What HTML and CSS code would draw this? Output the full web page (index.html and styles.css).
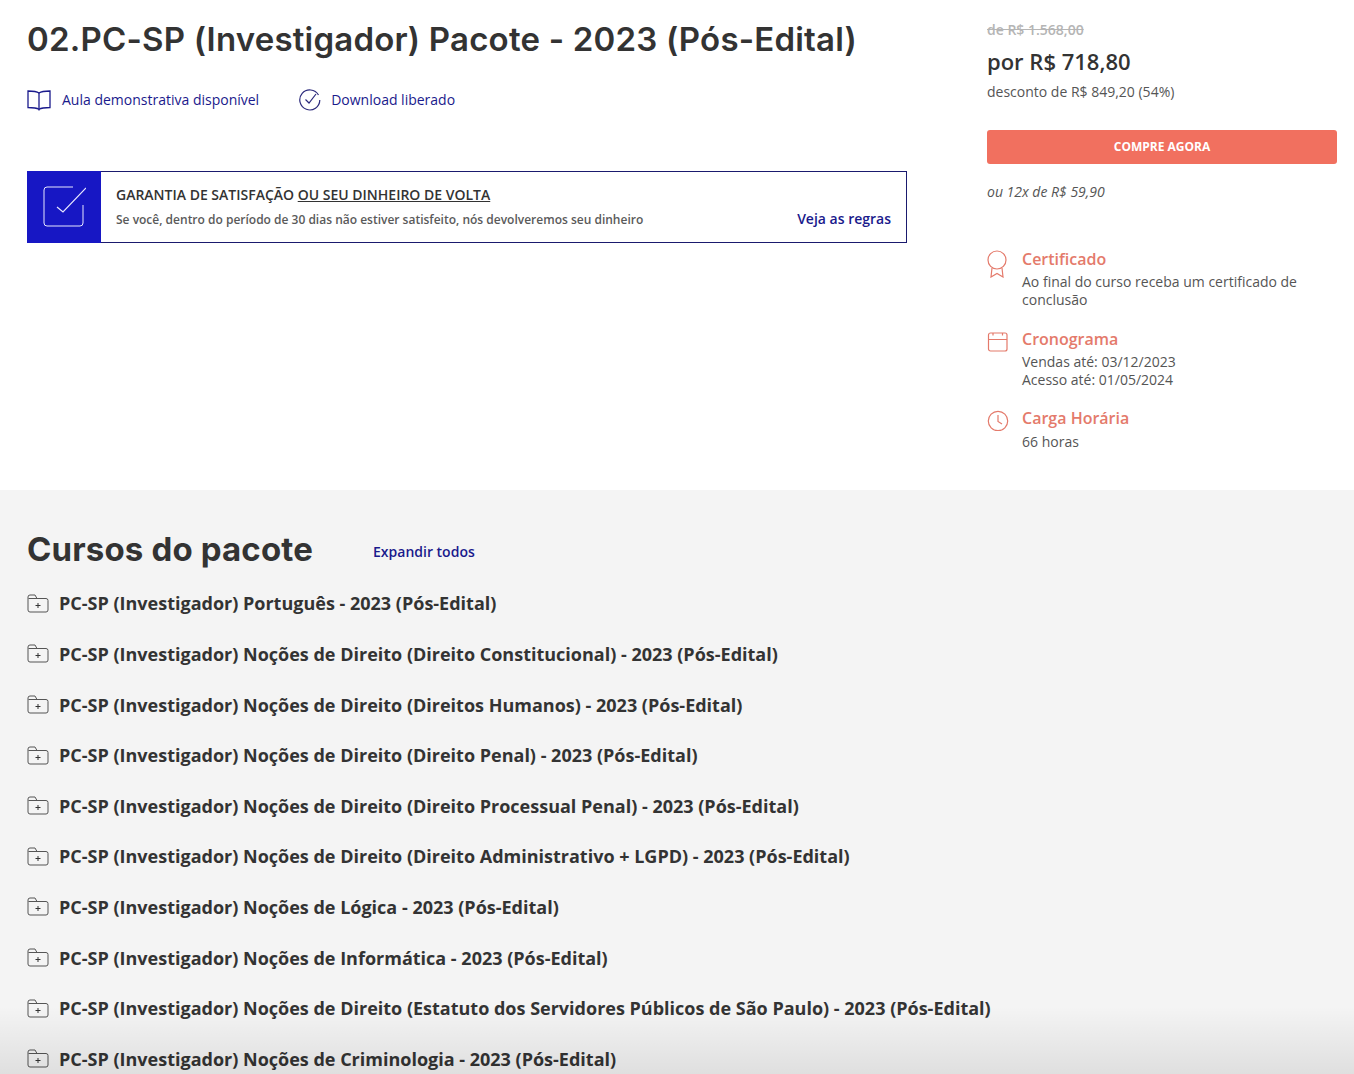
FILE: index.html
```html
<!DOCTYPE html>
<html lang="pt-BR">
  <head>
    <meta charset="UTF-8" />
    <title>02.PC-SP (Investigador) Pacote - 2023 (Pós-Edital)</title>
    <link rel="stylesheet" href="styles.css">
  </head>
  <body>
    <section class="top">
      <div class="main-col">
        <h1>02.PC-SP (Investigador) Pacote - 2023 (Pós-Edital)</h1>

        <div class="features">
          <a class="feature feature-book">
            <svg class="feature-icon" width="24" height="22" viewBox="0 0 24 22" fill="none" stroke="#1a1a8c" stroke-width="1.3">
              <path d="M12 4 C10 2.6 7 2 1 2 V18.5 C7 18.5 10 19 12 20.2 C14 19 17 18.5 23 18.5 V2 C17 2 14 2.6 12 4 Z" />
              <path d="M12 4 V21.5" />
            </svg>
            Aula demonstrativa disponível
          </a>
          <a class="feature">
            <svg class="feature-icon" width="22" height="22" viewBox="0 0 22 22" fill="none" stroke="#2c2a7c" stroke-width="1.2">
              <path d="M19.5 6 A10 10 0 1 0 20.8 11" />
              <path d="M6.5 10.5 L10 14 L17 5" />
            </svg>
            Download liberado
          </a>
        </div>

        <div class="guarantee">
          <div class="guarantee-icon">
            <svg width="44" height="44" viewBox="0 0 44 44" fill="none" stroke="#e8e8ff" stroke-width="1">
              <path d="M31 2 H5 A3 3 0 0 0 2 5 V38 A3 3 0 0 0 5 41 H38 A3 3 0 0 0 41 38 V20" />
              <path d="M15 22 L21 27 L44 3" stroke-width="1.2" />
            </svg>
          </div>
          <div class="guarantee-text">
            <p class="guarantee-title">GARANTIA DE SATISFAÇÃO <u>OU SEU DINHEIRO DE VOLTA</u></p>
            <div class="guarantee-row">
              <span class="guarantee-desc">Se você, dentro do período de 30 dias não estiver satisfeito, nós devolveremos seu dinheiro</span>
              <a class="rules">Veja as regras</a>
            </div>
          </div>
        </div>
      </div>

      <aside class="side-col">
        <div class="old-price">de R$ 1.568,00</div>
        <div class="price">por R$ 718,80</div>
        <div class="discount">desconto de R$ 849,20 (54%)</div>
        <button class="buy">COMPRE AGORA</button>
        <div class="installments">ou 12x de R$ 59,90</div>

        <div class="info">
          <svg class="info-icon" width="22" height="28" viewBox="0 0 22 28" fill="none" stroke="#e47a6b" stroke-width="1.2">
            <circle cx="10" cy="10" r="9" />
            <path d="M5 18 L4 27 L10 23.5 L16 27 L15 18" />
          </svg>
          <div>
            <h3>Certificado</h3>
            <p>Ao final do curso receba um certificado de conclusão</p>
          </div>
        </div>
        <div class="info">
          <svg class="info-icon" width="22" height="22" viewBox="0 0 22 22" fill="none" stroke="#e47a6b" stroke-width="1.2">
            <rect x="1.5" y="3" width="18.5" height="18" rx="2" />
            <path d="M1.5 9.5 H20 M6 3 V5.5 M15.5 3 V5.5" />
          </svg>
          <div>
            <h3>Cronograma</h3>
            <p>Vendas até: 03/12/2023<br>Acesso até: 01/05/2024</p>
          </div>
        </div>
        <div class="info">
          <svg class="info-icon" width="22" height="22" viewBox="0 0 22 22" fill="none" stroke="#e47a6b" stroke-width="1.2">
            <circle cx="11" cy="12" r="9.7" />
            <path d="M11 6 V12.5 L15 15" />
          </svg>
          <div>
            <h3>Carga Horária</h3>
            <p class="hours">66 horas</p>
          </div>
        </div>
      </aside>
    </section>

    <section class="courses">
      <div class="courses-head">
        <h2>Cursos do pacote</h2>
        <a class="expand">Expandir todos</a>
      </div>
      <ul class="course-list">
        <li><svg class="folder" width="22" height="19" viewBox="0 0 22 19"><use href="#folder-plus" /></svg>PC-SP (Investigador) Português - 2023 (Pós-Edital)</li>
        <li><svg class="folder" width="22" height="19" viewBox="0 0 22 19"><use href="#folder-plus" /></svg>PC-SP (Investigador) Noções de Direito (Direito Constitucional) - 2023 (Pós-Edital)</li>
        <li><svg class="folder" width="22" height="19" viewBox="0 0 22 19"><use href="#folder-plus" /></svg>PC-SP (Investigador) Noções de Direito (Direitos Humanos) - 2023 (Pós-Edital)</li>
        <li><svg class="folder" width="22" height="19" viewBox="0 0 22 19"><use href="#folder-plus" /></svg>PC-SP (Investigador) Noções de Direito (Direito Penal) - 2023 (Pós-Edital)</li>
        <li><svg class="folder" width="22" height="19" viewBox="0 0 22 19"><use href="#folder-plus" /></svg>PC-SP (Investigador) Noções de Direito (Direito Processual Penal) - 2023 (Pós-Edital)</li>
        <li><svg class="folder" width="22" height="19" viewBox="0 0 22 19"><use href="#folder-plus" /></svg>PC-SP (Investigador) Noções de Direito (Direito Administrativo + LGPD) - 2023 (Pós-Edital)</li>
        <li><svg class="folder" width="22" height="19" viewBox="0 0 22 19"><use href="#folder-plus" /></svg>PC-SP (Investigador) Noções de Lógica - 2023 (Pós-Edital)</li>
        <li><svg class="folder" width="22" height="19" viewBox="0 0 22 19"><use href="#folder-plus" /></svg>PC-SP (Investigador) Noções de Informática - 2023 (Pós-Edital)</li>
        <li><svg class="folder" width="22" height="19" viewBox="0 0 22 19"><use href="#folder-plus" /></svg>PC-SP (Investigador) Noções de Direito (Estatuto dos Servidores Públicos de São Paulo) - 2023 (Pós-Edital)</li>
        <li><svg class="folder" width="22" height="19" viewBox="0 0 22 19"><use href="#folder-plus" /></svg>PC-SP (Investigador) Noções de Criminologia - 2023 (Pós-Edital)</li>
      </ul>
      <div class="fade"></div>
    </section>

    <!-- icone de pasta -->
    <svg class="defs" width="0" height="0">
      <symbol id="folder-plus" viewBox="0 0 22 19">
        <path d="M1 16 V3 A2 2 0 0 1 3 1 H8 L10 4.5 H19 A2 2 0 0 1 21 6.5 V16 A2 2 0 0 1 19 18 H3 A2 2 0 0 1 1 16 Z M10 4.5 H1.5" fill="none" stroke="#555" stroke-width="1" />
        <path d="M11 9 V14 M8.5 11.5 H13.5" fill="none" stroke="#333" stroke-width="1" />
      </symbol>
    </svg>
  </body>
</html>
```

FILE: styles.css
```css
html,
body {
  height: 100%;
}

body {
  margin: 0;
  overflow: hidden;
  font-family: "Open Sans", sans-serif;
  color: #333;
  background-color: #f4f4f4;
}

.top {
  display: flex;
  justify-content: space-between;
  height: 490px;
  padding: 0 17px 0 27px;
  box-sizing: border-box;
  background-color: #fff;
}

.main-col {
  width: 880px;
}

h1 {
  margin: 18px 0 0;
  font-family: Inter, sans-serif;
  font-size: 33px;
  line-height: 42px;
  font-weight: 600;
  letter-spacing: 0.2px;
  color: #333;
}

.features {
  display: flex;
  gap: 40px;
  margin-top: 29px;
}

.feature {
  display: flex;
  align-items: center;
  gap: 10px;
  font-size: 14px;
  line-height: 22px;
  color: #1a1a8c;
}

.feature-book {
  gap: 11px;
}

.guarantee {
  display: flex;
  height: 72px;
  margin-top: 60px;
  box-sizing: border-box;
  border: 1px solid #1a1a6e;
}

.guarantee-icon {
  display: flex;
  align-items: center;
  justify-content: center;
  width: 74px;
  margin: -1px 0 -1px -1px;
  background-color: #1717c4;
}

.guarantee-text {
  flex: 1;
  padding: 13px 15px 0;
}

.guarantee-title {
  margin: 0;
  font-size: 14px;
  line-height: 20px;
  font-weight: 600;
  color: #333;
}

.guarantee-row {
  display: flex;
  justify-content: space-between;
  align-items: center;
  margin-top: 4px;
}

.guarantee-desc {
  font-size: 12px;
  font-weight: 600;
  color: #5a5a5a;
}

.rules {
  margin-bottom: 2px;
  font-size: 14px;
  font-weight: 600;
  color: #1a1a8c;
}

.side-col {
  width: 350px;
  padding-top: 20px;
}

.old-price {
  font-size: 14px;
  line-height: 20px;
  font-weight: 600;
  color: #b5b5b5;
  text-decoration: line-through;
}

.price {
  margin-top: 5px;
  font-size: 22px;
  line-height: 32px;
  font-weight: 600;
  color: #333;
}

.discount {
  margin-top: 5px;
  font-size: 14px;
  line-height: 20px;
  color: #555;
}

.buy {
  display: block;
  width: 100%;
  height: 34px;
  margin-top: 28px;
  padding: 0 0 2px;
  border: none;
  border-radius: 3px;
  background-color: #f1705f;
  color: #fff;
  font-family: inherit;
  font-size: 12px;
  font-weight: 700;
}

.installments {
  margin-top: 18px;
  margin-bottom: 46px;
  font-size: 14px;
  line-height: 20px;
  font-style: italic;
  color: #555;
}

.info {
  display: flex;
  gap: 13px;
  margin-bottom: 18.5px;
}

.info-icon {
  flex-shrink: 0;
  margin-top: 2px;
}

.info h3 {
  margin: 0;
  font-size: 16px;
  line-height: 22px;
  font-weight: 600;
  color: #e47a6b;
}

.info p {
  margin: 3px 0 0;
  font-size: 14px;
  line-height: 18px;
  color: #555;
}

.info .hours {
  margin-top: 4px;
}

.courses {
  position: relative;
  height: 584px;
  padding: 37px 27px 0;
  box-sizing: border-box;
  overflow: hidden;
}

.courses-head {
  display: flex;
  align-items: center;
  gap: 60px;
}

h2 {
  margin: 0;
  font-family: Inter, sans-serif;
  font-size: 33px;
  line-height: 44px;
  font-weight: 700;
  letter-spacing: 0.15px;
  color: #333;
}

.expand {
  margin-top: 4px;
  font-size: 14px;
  font-weight: 600;
  color: #1a1a8c;
}

.course-list {
  list-style: none;
  margin: 7px 0 0;
  padding: 0;
}

.course-list li {
  display: flex;
  align-items: center;
  gap: 10px;
  height: 50.62px;
  font-size: 18px;
  font-weight: 700;
  color: #333;
}

.fade {
  position: absolute;
  left: 0;
  right: 0;
  bottom: 0;
  height: 68px;
  background: linear-gradient(rgba(0, 0, 0, 0), rgba(0, 0, 0, 0.085));
  pointer-events: none;
}

.defs {
  position: absolute;
}
```
